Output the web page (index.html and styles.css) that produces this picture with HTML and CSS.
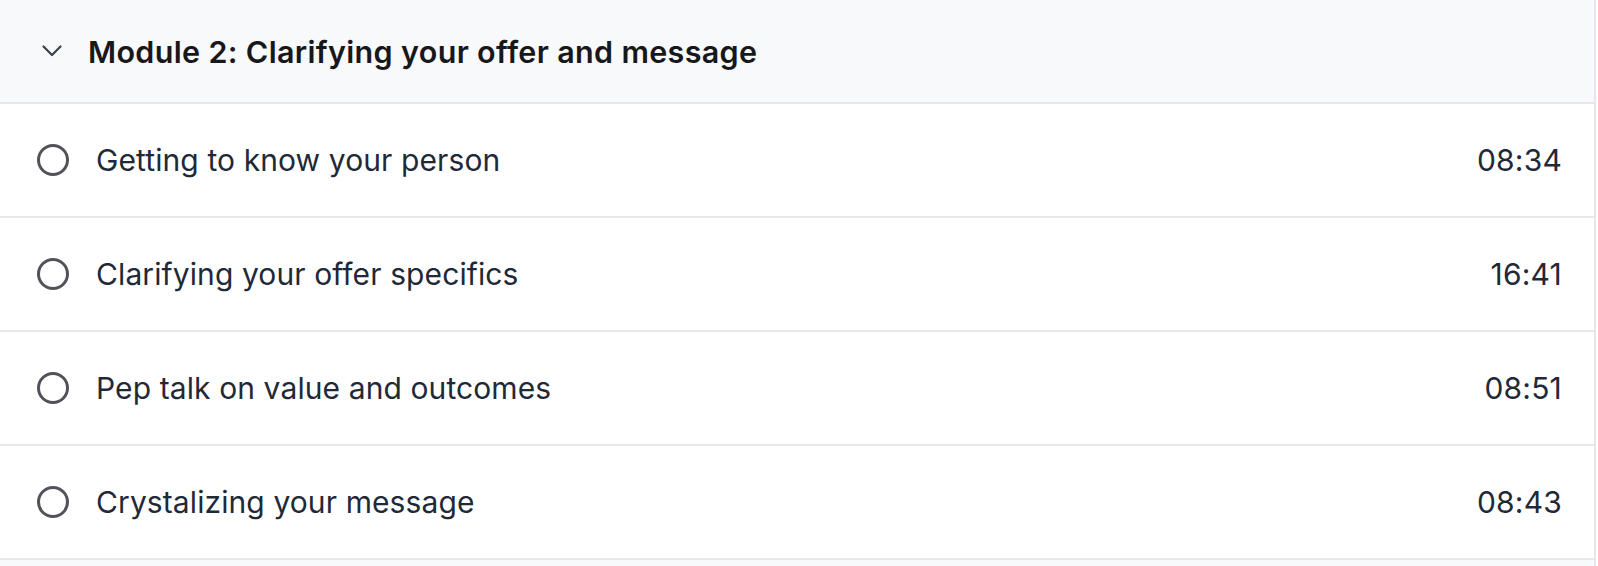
FILE: index.html
```html
<!DOCTYPE html>
<html lang="en">
<head>
<meta charset="utf-8">
<title>Module 2</title>
<link rel="stylesheet" href="styles.css">
</head>
<body>
<div class="module">
  <div class="module-header">
    <svg class="chevron" width="20" height="12" viewBox="0 0 20 12" aria-hidden="true">
      <path d="M1.5 1.5 L10 10 L18.5 1.5" fill="none" stroke="#374151" stroke-width="2.2" stroke-linecap="round" stroke-linejoin="round"/>
    </svg>
    <span class="module-title">Module 2: Clarifying your offer and message</span>
  </div>
  <div class="lesson">
    <span class="circle"></span>
    <span class="lesson-title">Getting to know your person</span>
    <span class="lesson-time">08:34</span>
  </div>
  <div class="lesson">
    <span class="circle"></span>
    <span class="lesson-title">Clarifying your offer specifics</span>
    <span class="lesson-time">16:41</span>
  </div>
  <div class="lesson">
    <span class="circle"></span>
    <span class="lesson-title">Pep talk on value and outcomes</span>
    <span class="lesson-time">08:51</span>
  </div>
  <div class="lesson">
    <span class="circle"></span>
    <span class="lesson-title">Crystalizing your message</span>
    <span class="lesson-time">08:43</span>
  </div>
  <div class="module-header next"></div>
</div>
</body>
</html>
```
FILE: styles.css
```css
html, body {
  margin: 0;
  padding: 0;
  background: #ffffff;
  font-family: Inter, "Noto Sans", sans-serif;
  overflow: hidden;
}
.module {
  width: 1594px;
  border-right: 2px solid #e5e7eb;
}
.module-header {
  background: #f8f9fb;
  border-bottom: 2px solid #e5e7eb;
  display: flex;
  align-items: center;
  padding-left: 42px;
  box-sizing: border-box;
  height: 104px;
}
.chevron {
  display: block;
  margin-right: 26px;
}
.module-title {
  font-size: 30.5px;
  font-weight: 600;
  color: #18181b;
  letter-spacing: 0.33px;
}
.lesson {
  display: flex;
  align-items: center;
  height: 114px;
  box-sizing: border-box;
  border-bottom: 2px solid #e5e7eb;
  padding: 0 32px 0 37px;
}
.circle {
  width: 32px;
  height: 32px;
  box-sizing: border-box;
  border: 3px solid #52525b;
  border-radius: 50%;
  flex: none;
  margin-right: 27px;
}
.lesson-title {
  flex: 1;
  font-size: 30px;
  color: #1f2937;
  letter-spacing: 0.1px;
}
.lesson-time {
  font-size: 30px;
  color: #1f2937;
  letter-spacing: 0.2px;
}
.module-header.next {
  border-bottom: none;
}
```
